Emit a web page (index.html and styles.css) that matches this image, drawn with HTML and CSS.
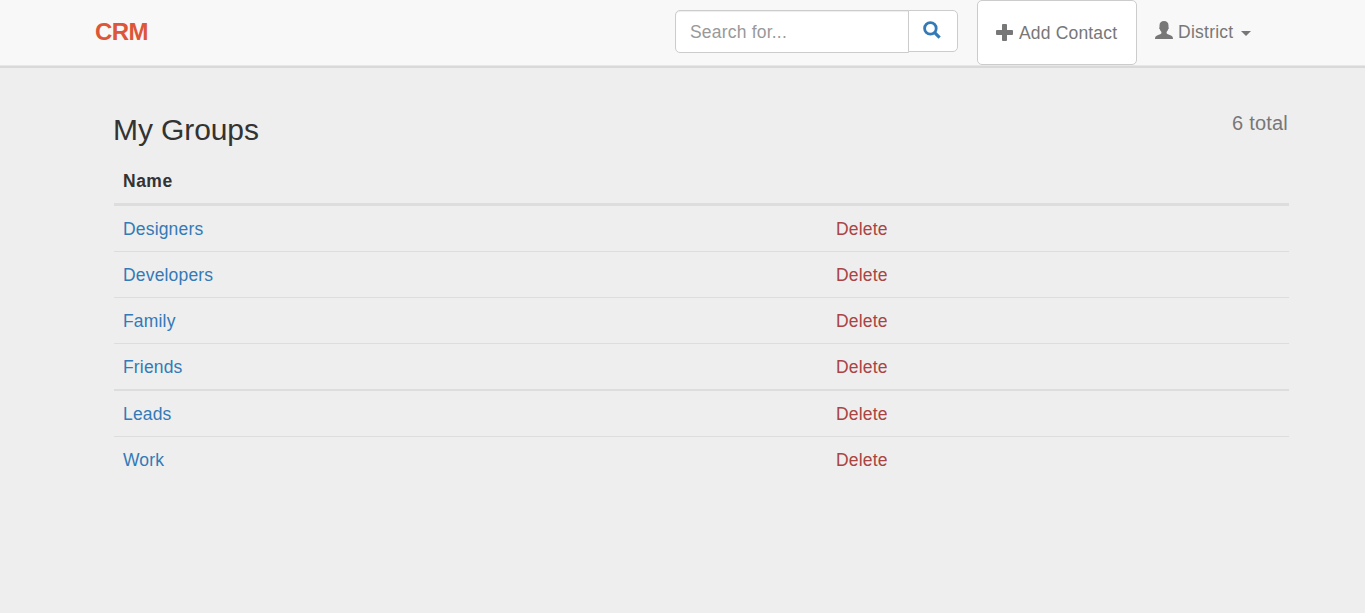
FILE: index.html
```html
<!DOCTYPE html>
<html lang="en">
<head>
<meta charset="utf-8">
<title>CRM</title>
<link rel="stylesheet" href="styles.css">
</head>
<body>
<nav class="navbar">
  <a class="brand" href="#">CRM</a>
  <form class="search">
    <input class="search-input" type="text" placeholder="Search for...">
    <button class="search-button" type="button" aria-label="Search">
      <svg class="icon-search" viewBox="0 0 18 18"><circle cx="7.4" cy="7.4" r="5.8" fill="none" stroke="currentColor" stroke-width="2.8"/><path d="M11.700 11.700L16.600 16.600" stroke="currentColor" stroke-width="3.2" fill="none"/></svg>
    </button>
  </form>
  <a class="add-contact" href="#">
    <svg class="icon-plus" viewBox="0 0 17 17"><path d="M6.900 0h3.200q.9 0 .9.900V6h5.100q.9 0 .9.900v3.200q0 .9-.9.900H11v5.100q0 .9-.9.900H6.900q-.9 0-.9-.9V11H.9q-.9 0-.9-.9V6.900q0-.9.9-.9H6V.9q0-.9.900-.9z" fill="currentColor"/></svg>
    <span>Add Contact</span>
  </a>
  <a class="user" href="#">
    <svg class="icon-user" viewBox="0 0 18 18"><path d="M9 0C11.800 0 13.500 1.700 13.500 4.500V6.200C14.100 6.600 13.800 8 13.100 8.300C12.900 9.500 12.300 10.300 11.600 10.900V12.300C12.100 13.200 14.500 13.800 16.300 14.700C17.600 15.400 18 16.400 18 18H0C0 16.400.4 15.400 1.700 14.700C3.500 13.800 5.900 13.200 6.400 12.300V10.900C5.700 10.300 5.100 9.500 4.900 8.300C4.200 8 3.900 6.600 4.500 6.200V4.500C4.500 1.700 6.200 0 9 0Z" fill="currentColor"/></svg>
    <span class="user-name">District</span>
    <span class="caret"></span>
  </a>
</nav>
<main class="content">
  <header class="heading">
    <h1 class="title">My Groups</h1>
    <span class="total">6 total</span>
  </header>
  <table class="groups">
    <thead><tr><th class="name">Name</th><th></th></tr></thead>
    <tbody>
      <tr><td><a href="#">Designers</a></td><td><a class="delete" href="#">Delete</a></td></tr>
      <tr><td><a href="#">Developers</a></td><td><a class="delete" href="#">Delete</a></td></tr>
      <tr><td><a href="#">Family</a></td><td><a class="delete" href="#">Delete</a></td></tr>
      <tr><td><a href="#">Friends</a></td><td><a class="delete" href="#">Delete</a></td></tr>
      <tr class="thick"><td><a href="#">Leads</a></td><td><a class="delete" href="#">Delete</a></td></tr>
      <tr><td><a href="#">Work</a></td><td><a class="delete" href="#">Delete</a></td></tr>
    </tbody>
  </table>
</main>
</body>
</html>
```

FILE: styles.css
```css
* { box-sizing: border-box; }
body {
  margin: 0;
  background: #eee;
  color: #333;
  font: 17.5px/25px "Liberation Sans", Arial, sans-serif;
  letter-spacing: .17px;
}
a { color: #337ab7; text-decoration: none; }

.navbar {
  display: flex;
  align-items: flex-start;
  height: 68px;
  padding-left: 95px;
  background: #f8f8f8;
  border-bottom: 2px solid #d9d9d9;
  box-shadow: inset 0 -1px #e7e7e7;
}
.brand {
  width: 580px;
  padding-top: 19px;
  color: #dd5638;
  font-size: 24px;
  font-weight: bold;
  letter-spacing: -.6px;
}
.search { display: flex; align-items: flex-start; margin: 10px 19px 0 0; }
.search-input {
  width: 234px;
  height: 43px;
  padding: 2px 14px 0;
  border: 1px solid #ccc;
  border-radius: 5px 0 0 5px;
  background: #fff;
  box-shadow: inset 0 1px 1px rgba(0, 0, 0, .075);
  font: inherit;
  letter-spacing: .2px;
}
.search-input::placeholder { color: #999; opacity: 1; }
.search-button {
  width: 50px;
  height: 42px;
  margin-left: -1px;
  padding: 0 2px 2px 0;
  border: 1px solid #ccc;
  border-radius: 0 5px 5px 0;
  background: #fff;
  color: #337ab7;
  display: flex;
  align-items: center;
  justify-content: center;
}
.icon-search, .icon-user { width: 18px; height: 18px; }
.icon-plus { width: 17px; height: 17px; margin-bottom: 2px; }

.add-contact {
  display: flex;
  align-items: center;
  gap: 6px;
  width: 160px;
  height: 65px;
  padding: 1px 0 0 18px;
  border: 1px solid #ccc;
  border-radius: 5px;
  background: #fff;
  color: #777;
}
.user {
  display: flex;
  gap: 5px;
  padding: 20px 0 0 18px;
  color: #777;
}
.icon-user { margin-top: 1px; }
.user-name { letter-spacing: .25px; }
.caret {
  margin: 11px 0 0 3px;
  width: 10px;
  height: 5px;
  border: 5px solid transparent;
  border-top-color: #777;
  border-bottom: 0;
}

.content { width: 1175px; margin: 45px 0 0 114px; }
.heading { display: flex; justify-content: space-between; height: 55px; }
.title { margin: 0 0 0 -1px; font-size: 30px; font-weight: normal; line-height: 33px; letter-spacing: -.1px; }
.total { color: #777; font-size: 20px; line-height: 20px; letter-spacing: .2px; margin-right: 1px; }

.groups { width: 1175px; border-collapse: separate; border-spacing: 0; table-layout: fixed; }
.groups th { height: 38px; padding: 1px 9px 9px; border-bottom: 3px solid #ddd; text-align: left; letter-spacing: .5px; }
.groups .name { width: 713px; }
.groups td { height: 46px; padding: 2px 9px 0; border-top: 1px solid #ddd; }
.groups tbody tr:first-child td { height: 45px; border-top: 0; }
.groups .thick td { height: 47px; border-top-width: 2px; }
.groups .delete { color: #a94442; }
```
